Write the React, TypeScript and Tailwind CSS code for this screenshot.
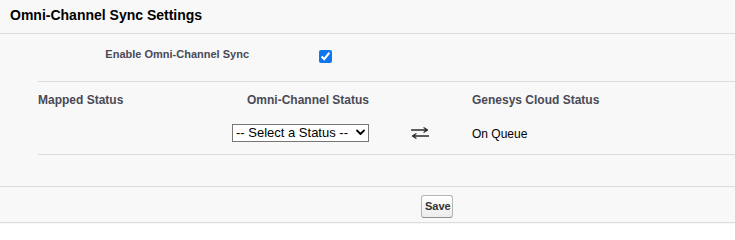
import { useState } from 'react';

function SwapArrows() {
  return (
    <svg width="18" height="12" viewBox="0 0 18 12" fill="none" stroke="#2b2b2b" strokeWidth="1.3" strokeLinecap="round" strokeLinejoin="round">
      <path d="M0.5 3H16.5M13 0.8L16.5 3L13 5.2" />
      <path d="M17.5 9H1.5M5 6.8L1.5 9L5 11.2" />
    </svg>
  );
}

export default function App() {
  const [enabled, setEnabled] = useState(true);
  const [status, setStatus] = useState('');

  return (
    <div className="w-full h-[224px] bg-[#f8f8f8] text-black font-['Liberation_Sans',Arial,sans-serif] overflow-hidden">
      {/* title bar */}
      <div className="h-[34px] pt-[7px] pl-[10px] border-b border-[#dcdcdc]">
        <h2 className="text-[14px] leading-[16px] font-bold">Omni-Channel Sync Settings</h2>
      </div>

      <div className="ml-[38px]">
        {/* enable row */}
        <div className="h-[48px] pt-[14px] flex items-start border-b border-[#dcdcdc]">
          <label htmlFor="omniSync" className="w-[211px] text-right text-[11px] leading-[13px] font-bold text-[#4a4a56]">
            Enable Omni-Channel Sync
          </label>
          <input
            id="omniSync"
            type="checkbox"
            checked={enabled}
            onChange={(e) => setEnabled(e.target.checked)}
            className="ml-[70px] mt-[2px] m-0 w-[13px] h-[13px] accent-[#0f76ef]"
          />
        </div>

        {/* mapping table */}
        <div className="border-b border-[#dcdcdc]">
          <div className="grid grid-cols-[194px_180px_60px_1fr] h-[30px] pt-[11px] text-[12px] leading-[14px] font-bold text-[#4a4a56]">
            <div>Mapped Status</div>
            <div className="pl-[15px]">Omni-Channel Status</div>
            <div></div>
            <div>Genesys Cloud Status</div>
          </div>
          <div className="grid grid-cols-[194px_179px_61px_1fr] h-[42px] pt-[12px] items-start text-[12px] leading-[14px]">
            <div></div>
            <div className="relative w-[137px] h-[18px]">
              <select
                value={status}
                onChange={(e) => setStatus(e.target.value)}
                className="appearance-none w-full h-full bg-white border border-[#767676] rounded-none pl-[3px] pr-[14px] text-[13px] leading-[16px] text-black font-['Liberation_Sans',Arial,sans-serif]"
              >
                <option value="">-- Select a Status --</option>
                <option value="available">Available</option>
                <option value="busy">Busy</option>
              </select>
              <svg className="absolute right-[4px] top-[5px] pointer-events-none" width="9" height="7" viewBox="0 0 9 7" fill="none" stroke="#000" strokeWidth="1.8" strokeLinecap="round" strokeLinejoin="round">
                <path d="M1 1.5L4.5 5L8 1.5" />
              </svg>
            </div>
            <div className="pt-[3px]">
              <SwapArrows />
            </div>
            <div className="pt-[3px]">On Queue</div>
          </div>
        </div>
      </div>

      {/* footer */}
      <div className="mt-[31px] border-t border-[#dcdcdc] border-b h-[37px] pt-[6px] pl-[421px]">
        <button className="h-[23px] px-[3px] w-[32px] rounded-[3px] border border-[#b5b5b5] border-b-[#8f8f8f] bg-gradient-to-b from-white to-[#ececec] text-[11px] font-bold text-[#333]">
          Save
        </button>
      </div>
    </div>
  );
}
